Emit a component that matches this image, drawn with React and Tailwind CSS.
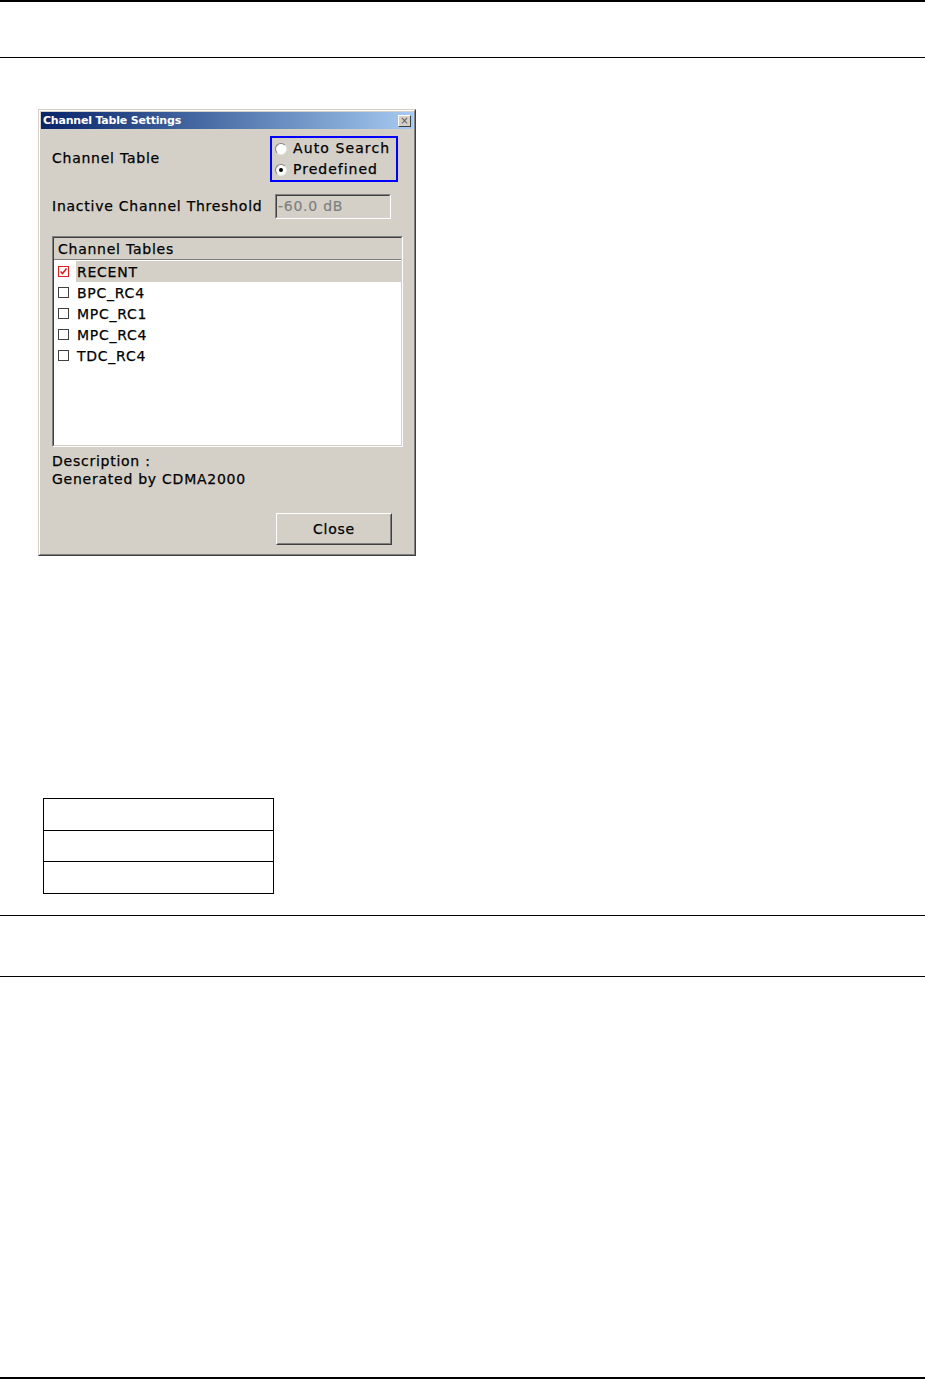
import React from "react";

const font = { fontFamily: '"DejaVu Sans", Verdana, sans-serif' };

function Check({ checked }) {
  return (
    <span
      className={`inline-flex items-center justify-center w-[11px] h-[11px] border ${
        checked ? "border-[#e02020]" : "border-[#404040]"
      } bg-white shrink-0`}
    >
      {checked && (
        <svg width="9" height="9" viewBox="0 0 9 9">
          <path d="M1.5 4.5 L3.5 6.5 L7.5 1.5" stroke="#e02020" strokeWidth="1.6" fill="none" />
        </svg>
      )}
    </span>
  );
}

function Radio({ on }) {
  return (
    <span className="relative inline-block w-[12px] h-[12px] rounded-full bg-white border border-t-[#808080] border-l-[#808080] border-r-[#e8e8e8] border-b-[#e8e8e8] shrink-0">
      {on && <span className="absolute left-[3px] top-[3px] w-[4px] h-[4px] rounded-full bg-black" />}
    </span>
  );
}

export default function App() {
  const rows = ["RECENT", "BPC_RC4", "MPC_RC1", "MPC_RC4", "TDC_RC4"];
  return (
    <div className="w-[925px] h-[1379px] bg-white flex flex-col" style={font}>
      <div className="h-[2px] bg-black" />
      <div className="h-[55px]" />
      <div className="h-px bg-black" />
      <div className="h-[51px]" />
      {/* Dialog */}
      <div className="ml-[38px] w-[378px] h-[447px] border border-t-[#d4d0c8] border-l-[#d4d0c8] border-r-[#404040] border-b-[#404040] bg-[#d4d0c8]">
        <div className="h-full border border-t-white border-l-white border-r-[#808080] border-b-[#808080] flex flex-col px-[1px] pt-[1px]">
          <div className="h-[17px] flex items-center justify-between pl-[2px] pr-[2px] bg-gradient-to-r from-[#0a246a] to-[#a6caf0]">
            <span className="text-white text-[11px] font-bold leading-none tracking-[-0.2px]">
              Channel Table Settings
            </span>
            <span className="w-[13px] h-[12px] bg-[#d4d0c8] border border-t-white border-l-white border-r-[#404040] border-b-[#404040] flex items-center justify-center text-[10px] leading-none text-[#555]">
              ×
            </span>
          </div>
          <div className="flex-1 flex flex-col pl-[11px] pr-[12px] text-[14px] tracking-[0.75px] text-black [-webkit-text-stroke:0.25px_black]">
            <div className="flex items-center justify-between mt-[7px]">
              <span className="mt-[-1px]">Channel Table</span>
              <div className="w-[128px] h-[46px] border-2 border-[#0000ff] flex flex-col justify-center pl-[3px] gap-[3px] mr-[3px]">
                <div className="flex items-center gap-[6px] h-[18px] tracking-[1.1px]">
                  <Radio on={false} />
                  <span>Auto Search</span>
                </div>
                <div className="flex items-center gap-[6px] h-[18px] tracking-[1px]">
                  <Radio on={true} />
                  <span>Predefined</span>
                </div>
              </div>
            </div>
            <div className="flex items-center mt-[12px]">
              <span className="w-[223px]">Inactive Channel Threshold</span>
              <div className="w-[116px] h-[25px] border border-t-[#808080] border-l-[#808080] border-r-white border-b-white">
                <div className="h-full border border-t-[#404040] border-l-[#404040] border-r-[#d4d0c8] border-b-[#d4d0c8] flex items-center pl-[1px] text-[#808080] [-webkit-text-stroke:0.2px_#808080]">
                  -60.0 dB
                </div>
              </div>
            </div>
            <div className="mt-[17px] w-[351px] h-[211px] border border-t-[#808080] border-l-[#808080] border-r-white border-b-white">
              <div className="h-full border border-t-[#404040] border-l-[#404040] border-r-[#d4d0c8] border-b-[#d4d0c8] bg-white flex flex-col">
                <div className="h-[22px] bg-[#d4d0c8] border-b border-[#808080] flex items-center pl-[4px] pt-[2px]">
                  Channel Tables
                </div>
                <div className="flex flex-col pt-[1px]">
                  {rows.map((r, i) => (
                    <div key={r} className="h-[21px] flex items-center pl-[4px]">
                      <Check checked={i === 0} />
                      <span className={`ml-[7px] pl-[1px] pt-[1px] flex-1 h-full flex items-center ${i === 0 ? "bg-[#d4d0c8]" : ""}`}>
                        {r}
                      </span>
                    </div>
                  ))}
                </div>
              </div>
            </div>
            <div className="mt-[5px] leading-[18px]">
              <div>Description :</div>
              <div>Generated by CDMA2000</div>
            </div>
            <div className="flex justify-end mt-[25px] mr-[9px]">
              <div className="w-[116px] h-[32px] border border-t-white border-l-white border-r-[#404040] border-b-[#404040]">
                <div className="h-full border border-t-[#d4d0c8] border-l-[#d4d0c8] border-r-[#808080] border-b-[#808080] flex items-center justify-center">
                  Close
                </div>
              </div>
            </div>
          </div>
        </div>
      </div>
      <div className="h-[242px]" />
      {/* Empty table */}
      <div className="ml-[43px] w-[231px] border border-black flex flex-col">
        <div className="h-[32px] border-b border-black" />
        <div className="h-[31px] border-b border-black" />
        <div className="h-[31px]" />
      </div>
      <div className="h-[21px]" />
      <div className="h-px bg-black" />
      <div className="h-[60px]" />
      <div className="h-px bg-black" />
      <div className="flex-1" />
      <div className="h-[2px] bg-black" />
    </div>
  );
}
